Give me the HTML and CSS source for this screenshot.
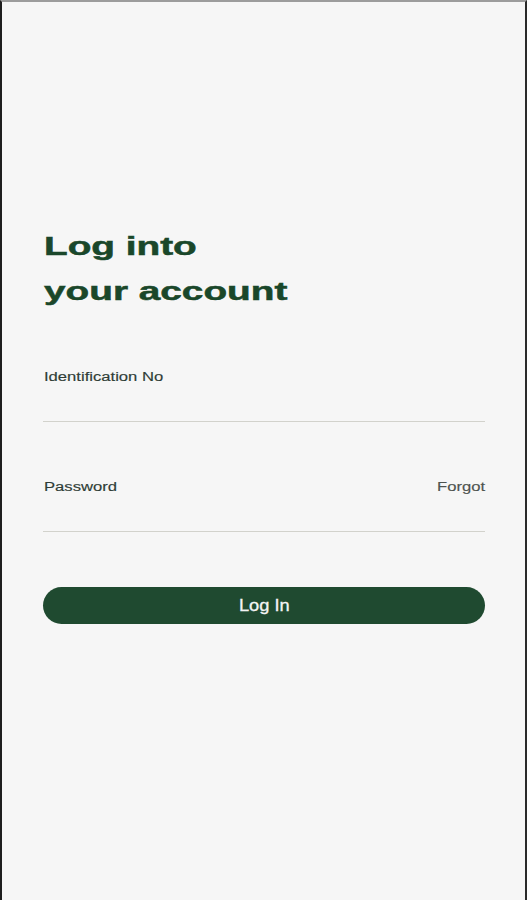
FILE: index.html
```html
<!DOCTYPE html>
<html lang="en">
<head>
<meta charset="utf-8">
<title>Log into your account</title>
<link rel="stylesheet" href="styles.css">
</head>
<body>
<div class="screen">
  <main class="login">
    <h1 class="title"><span class="wide">Log into</span><br><span class="wide">your account</span></h1>
    <form class="form">
      <div class="field">
        <div class="label-row"><label class="label"><span class="wide-sm">Identification No</span></label></div>
        <div class="input"></div>
      </div>
      <div class="field field-pass">
        <div class="label-row">
          <label class="label"><span class="wide-sm">Password</span></label>
          <a class="forgot"><span class="wide-sm right">Forgot</span></a>
        </div>
        <div class="input"></div>
      </div>
      <button type="button" class="btn"><span class="wide-btn">Log In</span></button>
    </form>
  </main>
</div>
</body>
</html>
```

FILE: styles.css
```css
html, body {
  margin: 0;
  padding: 0;
  background: #f6f6f6;
}
.screen {
  box-sizing: border-box;
  width: 527px;
  height: 900px;
  border-left: 2px solid #1e1e1e;
  border-right: 2px solid #2a2a2a;
  border-top: 2px solid #9c9c9c;
  background: #f6f6f6;
  font-family: "Liberation Sans", Arial, sans-serif;
  overflow: hidden;
}
.login {
  padding: 222px 40px 0 41px;
}
.title {
  margin: 0;
  padding-left: 1px;
  font-size: 25px;
  line-height: 45px;
  font-weight: 700;
  color: #1a472a;
  white-space: nowrap;
  -webkit-text-stroke: 0.5px #1a472a;
}
.wide {
  display: inline-block;
  transform: scaleX(1.55);
  transform-origin: left center;
}
.form {
  margin-top: 55px;
  display: flex;
  flex-direction: column;
}
.label-row {
  display: flex;
  justify-content: space-between;
  height: 16px;
  line-height: 16px;
  font-size: 12.5px;
  padding-left: 1px;
}
.label {
  color: #2f3d36;
  -webkit-text-stroke: 0.15px #2f3d36;
}
.forgot {
  color: #4d534f;
  -webkit-text-stroke: 0.15px #4d534f;
}
.wide-sm {
  display: inline-block;
  transform: scaleX(1.33);
  transform-origin: left center;
}
.wide-sm.right {
  transform-origin: right center;
}
.input {
  height: 36px;
  border-bottom: 1px solid #d2d2cc;
}
.field-pass {
  margin-top: 57px;
}
.btn {
  margin-top: 55px;
  height: 37px;
  border: none;
  border-radius: 19px;
  background: #1f4a30;
  color: #f4f4f4;
  font-family: "Liberation Sans", Arial, sans-serif;
  font-size: 16px;
  font-weight: 400;
  padding: 0;
  display: flex;
  align-items: center;
  justify-content: center;
}
.wide-btn {
  display: inline-block;
  transform: scaleX(1.14);
  transform-origin: center;
  -webkit-text-stroke: 0.3px #f4f4f4;
}
```
